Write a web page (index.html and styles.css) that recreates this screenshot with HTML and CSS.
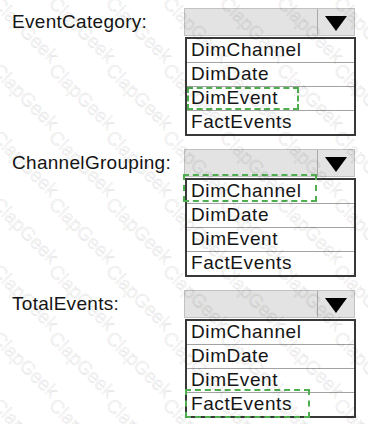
FILE: index.html
```html
<!DOCTYPE html>
<html lang="en">

	<head>
		<meta charset="utf-8">
		<title>Column Mapping</title>
		<meta name="viewport" content="width=device-width, initial-scale=1.0">

		<link rel="stylesheet" href="styles.css">
	</head>

	<body>

		<div class="page">

			<div class="group">
				<div class="label">EventCategory:</div>
				<div class="picker">
					<div class="dropdown">
						<div class="dropdown-value"></div>
						<div class="dropdown-arrow">
							<svg width="22" height="15" viewBox="0 0 22 15"><polygon points="0,0 22,0 11,15" fill="#000"/></svg>
						</div>
					</div>
					<div class="options">
						<div class="option">DimChannel</div>
						<div class="option">DimDate</div>
						<div class="option">DimEvent<span class="mark mark-event"></span></div>
						<div class="option">FactEvents</div>
					</div>
				</div>
			</div>

			<div class="group">
				<div class="label">ChannelGrouping:</div>
				<div class="picker">
					<div class="dropdown">
						<div class="dropdown-value"></div>
						<div class="dropdown-arrow">
							<svg width="22" height="15" viewBox="0 0 22 15"><polygon points="0,0 22,0 11,15" fill="#000"/></svg>
						</div>
					</div>
					<div class="options">
						<div class="option">DimChannel<span class="mark mark-channel"></span></div>
						<div class="option">DimDate</div>
						<div class="option">DimEvent</div>
						<div class="option">FactEvents</div>
					</div>
				</div>
			</div>

			<div class="group">
				<div class="label">TotalEvents:</div>
				<div class="picker">
					<div class="dropdown">
						<div class="dropdown-value"></div>
						<div class="dropdown-arrow">
							<svg width="22" height="15" viewBox="0 0 22 15"><polygon points="0,0 22,0 11,15" fill="#000"/></svg>
						</div>
					</div>
					<div class="options">
						<div class="option">DimChannel</div>
						<div class="option">DimDate</div>
						<div class="option">DimEvent</div>
						<div class="option">FactEvents<span class="mark mark-fact"></span></div>
					</div>
				</div>
			</div>

			<div class="watermark" id="watermark"></div>

		</div>

		<script>
			// Fill the watermark layer with a diagonal grid of labels
			let layer = document.querySelector('#watermark');
			let html = '';
			for (let row = 0; row < 8; row++) {
				for (let col = 0; col < 8; col++) {
					html += '<span style="left:' + (2 + col * 57) + 'px;top:' + (-74 + row * 67) + 'px">ClapGeek</span>';
				}
			}
			layer.innerHTML = html;
		</script>
	</body>
</html>
```

FILE: styles.css
```css
body {
	margin: 0;
	background: #fff;
	font-family: "Liberation Sans", Arial, sans-serif;
	color: #151515;
}

.page {
	position: relative;
	width: 368px;
	height: 424px;
	overflow: hidden;
	padding-top: 8px;
	box-sizing: border-box;
}

.group {
	display: flex;
	margin-bottom: 13px;
}

.label {
	width: 172px;
	padding-left: 12px;
	padding-top: 3px;
	font-size: 19px;
	line-height: 22px;
	letter-spacing: 0.3px;
}

.picker {
	width: 172px;
}

.dropdown {
	display: flex;
	height: 28px;
	width: 171px;
	background: #e3e3e3;
	border: 1px solid #c2c2c2;
	box-sizing: border-box;
}

.dropdown-value {
	flex: 1;
}

.dropdown-arrow {
	width: 37px;
	border-left: 1px solid #a9a9a9;
	display: flex;
	align-items: center;
	justify-content: center;
	padding-top: 2px;
	box-sizing: border-box;
}

.options {
	margin-top: 1px;
	margin-left: 1px;
	border: 2px solid #383838;
}

.option {
	position: relative;
	height: 23px;
	line-height: 22px;
	padding-left: 4px;
	font-size: 19px;
	letter-spacing: 0.6px;
	border-top: 1px solid #a3a3a3;
}

.option:first-child {
	border-top: 0;
}

.mark {
	position: absolute;
	border: 2px dashed #4fae4f;
	box-sizing: border-box;
}

.mark-event {
	left: 0;
	top: 0;
	width: 112px;
	height: 23px;
}

.mark-channel {
	left: -4px;
	top: -6px;
	width: 134px;
	height: 28px;
}

.mark-fact {
	left: -2px;
	top: -4px;
	width: 125px;
	height: 29px;
}

.watermark {
	position: absolute;
	inset: 0;
	pointer-events: none;
}

.watermark span {
	position: absolute;
	font-size: 19px;
	line-height: 19px;
	white-space: nowrap;
	color: rgba(0, 0, 0, 0.03);
	-webkit-text-stroke: 0.6px rgba(0, 0, 0, 0.12);
	transform: rotate(45deg);
	transform-origin: left top;
}
```
